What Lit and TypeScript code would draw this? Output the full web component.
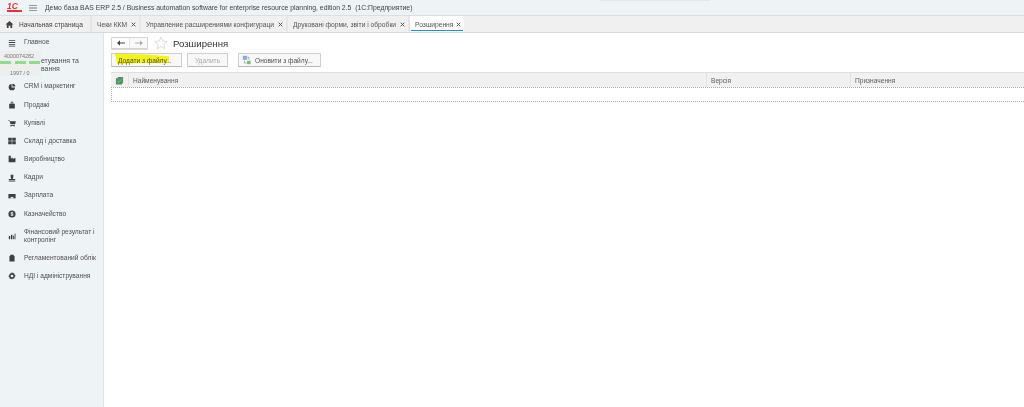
import { LitElement, html, css, svg } from "lit";
import { customElement } from "lit/decorators.js";

const icons: Record<string, unknown> = {
  menu: svg`<path d="M1 1.500h8v1.100H1zM1 3.800h8v1.100H1zM1 6.100h8v1.100H1zM1 8.400h8v1.100H1z"/>`,
  crm: svg`<path d="M4.500 1.200a4 4 0 1 0 4.300 4.300H4.500zM5.500 .8v3.700h3.700A3.800 3.800 0 0 0 5.500 .8z"/>`,
  bag: svg`<path d="M1.500 3.500h7v6h-7zM3.500 3.500V1h3v2.500h-.8V1.800H4.300v1.700z"/>`,
  cart: svg`<path d="M.2 1.500h2l.4 1.200h7.200l-.9 4H3.200L1.900 2.300H.2zM3 7.500h5.500v.8H3zM3.200 8.500h1.200v1H3.200zM7 8.500h1.200v1H7z"/>`,
  grid: svg`<path d="M.3 1h4.400v3.700H.3zM5.300 1h4.400v3.700H5.300zM.3 5.300h4.400V9H.3zM5.300 5.300h4.400V9H5.300z"/>`,
  factory: svg`<path d="M.8 1h2.700v3.500l2.500-1.500v2l3.300-1.500v5.500H.8z"/>`,
  person: svg`<path d="M3.300 .8h3.400v3.800H6l.2 1.700H9v1.500H1V6.300h2.800L4 4.600h-.7zM1 8.400h8v1H1z"/>`,
  wallet: svg`<path d="M.5 2.500h9v5.500h-9z"/><path fill="#eef3f6" d="M3 7l2-1.200L7 7v1H3z"/>`,
  coin: svg`<path fill-rule="evenodd" d="M5 .5a4.500 4.500 0 1 0 0 9 4.500 4.500 0 0 0 0-9zM3.500 2.800h3v1H4.700v.7H6.500v2.700h-3v-1h1.800v-.7H3.500z"/>`,
  chart: svg`<path d="M1 5h1.800v4H1zM3.700 3.500h1.800V9H3.700zM6.500 4.800h1.200V9H6.500zM8.300 2h1v7h-1z"/>`,
  doc: svg`<path d="M1.800 2.500h1V.8h4.400v1.700h1v7H1.800z"/>`,
  gear: svg`<path fill-rule="evenodd" d="M4.200 .5h1.600l.2 1.300 1-.6 1.400 1.300-.6 1 1.300.3v1.900l-1.300.3.600 1-1.400 1.300-1-.6-.2 1.300H4.200L4 8.200l-1 .6-1.400-1.300.6-1L.9 6.200V4.300l1.300-.3-.6-1L3 1.700l1 .6zM5 3.300a1.700 1.700 0 1 0 0 3.400 1.700 1.700 0 0 0 0-3.400z"/>`,
};

const nav: { icon?: string; label: string; cls: string }[] = [
  { icon: "menu", label: "Главное", cls: "h-main" },
  { label: "", cls: "h-over" },
  { icon: "crm", label: "CRM і маркетинг", cls: "" },
  { icon: "bag", label: "Продажі", cls: "" },
  { icon: "cart", label: "Купівлі", cls: "" },
  { icon: "grid", label: "Склад і доставка", cls: "" },
  { icon: "factory", label: "Виробництво", cls: "" },
  { icon: "person", label: "Кадри", cls: "" },
  { icon: "wallet", label: "Зарплата", cls: "" },
  { icon: "coin", label: "Казначейство", cls: "" },
  { icon: "chart", label: "Фінансовий результат і контролінг", cls: "tall" },
  { icon: "doc", label: "Регламентований облік", cls: "" },
  { icon: "gear", label: "НДІ і адміністрування", cls: "" },
];

const tabs = [
  { label: "Чеки ККМ", w: 49 },
  { label: "Управление расширениями конфигураци", w: 147 },
  { label: "Друковані форми, звіти і обробки", w: 122 },
  { label: "Розширення", w: 54, active: true },
];

@customElement("app-root")
export class AppRoot extends LitElement {
  static styles = css`
    :host {
      display: flex;
      flex-direction: column;
      width: 1024px;
      height: 407px;
      overflow: hidden;
      background: #fff;
      font-family: "Liberation Sans", Arial, sans-serif;
      font-size: 6.6px;
      color: #555;
      position: relative;
    }
    svg { display: block; }
    .title {
      height: 15px;
      flex: none;
      display: flex;
      align-items: center;
      background: #eef3f6;
      border-bottom: 1px solid #d9dfe2;
      position: relative;
    }
    .title::after {
      content: "";
      position: absolute;
      left: 600px;
      top: 0;
      width: 110px;
      height: 1px;
      background: #e4e8ea;
    }
    .logo {
      width: 15px;
      margin-left: 7px;
      font: italic bold 8.5px/7px "Liberation Sans", sans-serif;
      color: #e0353f;
      border-bottom: 2px solid #e0353f;
      box-sizing: border-box;
      height: 9px;
    }
    .burger { margin-left: 7px; margin-right: 8px; fill: #777; }
    .title-text { font-size: 6.83px; white-space: pre; color: #444; }
    .tabbar {
      height: 16px;
      flex: none;
      display: flex;
      background: #f0f0f0;
      border-bottom: 1px solid #d8d8d8;
    }
    .tab {
      display: flex;
      align-items: center;
      justify-content: space-between;
      box-sizing: border-box;
      height: 16px;
      padding: 0 3px 0 5px;
      border-right: 2px solid #e4e6e7;
      white-space: nowrap;
      color: #555;
      font-size: 6.7px;
    }
    .tab.home {
      width: 92px;
      justify-content: flex-start;
      gap: 5px;
      color: #444;
      font-size: 6.6px;
    }
    .tab.home svg { fill: #444; }
    .tab.active {
      background: #fff;
      border-right: none;
      position: relative;
    }
    .tab.active::after {
      content: "";
      position: absolute;
      left: 1px;
      right: 1px;
      bottom: 1px;
      height: 1px;
      background: #1b93d2;
    }
    .x { flex: none; stroke: #555; stroke-width: 1; fill: none; }
    .body { flex: 1; display: flex; min-height: 0; }
    .side {
      width: 104px;
      flex: none;
      box-sizing: border-box;
      background: #eef3f6;
      border-right: 1px solid #dde3e6;
      position: relative;
    }
    .item {
      display: flex;
      align-items: center;
      height: 18.2px;
      padding-left: 8px;
      gap: 8px;
      color: #505050;
      font-size: 6.65px;
      line-height: 8.5px;
    }
    .item svg { width: 8px; height: 8px; fill: #3e3e3e; flex: none; }
    .item.h-main { height: 19px; }
    .item.h-over { height: 25.5px; }
    .item.tall { height: 26px; }
    .item.tall span { width: 76px; }
    .peek {
      position: absolute;
      left: 41px;
      top: 23.5px;
      font-size: 6.9px;
      line-height: 8px;
      color: #505050;
      white-space: nowrap;
    }
    .badge {
      position: absolute;
      left: 0;
      top: 17.5px;
      width: 41px;
      height: 25px;
      background: #eeeeee;
      color: #777;
      font-size: 5.4px;
    }
    .badge .num { position: absolute; left: 4px; top: 2px; }
    .badge .sub { position: absolute; left: 10px; bottom: 0; }
    .dash { position: absolute; top: 10px; height: 3.5px; width: 11px; background: #8fdc8f; }
    .main { flex: 1; min-width: 0; padding: 3px 0 0 7px; }
    .head { display: flex; align-items: center; height: 14px; }
    .nav {
      display: flex;
      width: 37px;
      height: 12px;
      border: 1px solid #d3d3d3;
      box-sizing: border-box;
      border-radius: 1px;
      background: #fff;
      box-shadow: 0 1px 0 #dcdcdc;
    }
    .nav div { flex: 1; display: flex; align-items: center; justify-content: center; }
    .nav div + div { border-left: 1px solid #e4e4e4; background: #f9f9f9; }
    .star { margin-left: 6px; margin-right: 5px; fill: #fff; stroke: #d8d8d8; stroke-width: .9; }
    .h1 { font-size: 9.6px; color: #333; }
    .tools { display: flex; margin-top: 3px; height: 14px; }
    .btn {
      box-sizing: border-box;
      height: 14px;
      display: flex;
      align-items: center;
      border: 1px solid #cfcfcf;
      border-bottom-color: #b8b8b8;
      border-radius: 1px;
      background: #f8f8f8;
      color: #505050;
      white-space: nowrap;
    }
    .b1 { width: 71px; padding-left: 6px; }
    .b2 { width: 41px; margin-left: 5px; justify-content: center; color: #aaa; }
    .b3 { width: 83px; margin-left: 10px; padding-left: 3px; gap: 3px; }
    .mark {
      position: absolute;
      left: 115px;
      top: 53px;
      width: 54px;
      height: 11px;
      background: #fbfb1c;
      mix-blend-mode: multiply;
      clip-path: polygon(0 5%, 50% 12%, 100% 30%, 100% 88%, 50% 92%, 4% 100%);
    }
    .tbl { margin-top: 5px; }
    .thead {
      height: 15px;
      display: grid;
      grid-template-columns: 18px 578px 144px 1fr;
      background: #f1f1f1;
      border-top: 1px solid #dedede;
      box-sizing: border-box;
      color: #606060;
    }
    .thead > div {
      display: flex;
      align-items: center;
      padding-left: 4px;
      border-right: 1px solid #e2e2e2;
    }
    .thead > div:last-child { border-right: none; }
    .row {
      height: 15px;
      box-sizing: border-box;
      border: 1px dotted #a8a8a8;
      border-right: none;
    }
  `;

  render() {
    return html`
      <div class="title">
        <div class="logo">1С</div>
        <svg class="burger" width="8" height="8" viewBox="0 0 8 8"><path d="M0 1h8v.8H0zM0 3.600h8v.8H0zM0 6.200h8v.8H0z"/></svg>
        <div class="title-text">Демо база BAS ERP 2.5 / Business automation software for enterprise resource planning, edition 2.5  (1С:Предприятие)</div>
      </div>
      <div class="tabbar">
        <div class="tab home">
          <svg width="9" height="9" viewBox="0 0 10 10"><path d="M5 1l4.500 4H8v4H6V6.500H4V9H2V5H.5z"/></svg>
          <span>Начальная страница</span>
        </div>
        ${tabs.map(
          (t) => html`<div class="tab ${t.active ? "active" : ""}" style="width:${t.w}px">
            <span>${t.label}</span>
            <svg class="x" width="5" height="5" viewBox="0 0 5 5"><path d="M.7 .7l3.600 3.600M4.300 .7L.7 4.300"/></svg>
          </div>`
        )}
      </div>
      <div class="body">
        <aside class="side">
          ${nav.map(
            (n) => html`<div class="item ${n.cls}">
              ${n.icon ? html`<svg viewBox="0 0 10 10">${icons[n.icon]}</svg>` : ""}
              <span>${n.label}</span>
            </div>`
          )}
          <div class="peek"><div>етування та</div><div>вання</div></div>
          <div class="badge">
            <span class="num">4000074282</span>
            <i class="dash" style="left:0"></i>
            <i class="dash" style="left:15px"></i>
            <i class="dash" style="left:29px"></i>
            <span class="sub">1997 / 0</span>
          </div>
        </aside>
        <main class="main">
          <div class="head">
            <div class="nav">
              <div><svg width="8" height="6" viewBox="0 0 8 6"><path d="M0 3L3 .3v2.100h5v1.200H3v2.100z" fill="#444"/></svg></div>
              <div><svg width="8" height="6" viewBox="0 0 8 6"><path d="M8 3L5 .3v2.100H0v1.200h5v2.100z" fill="#b0b0b0"/></svg></div>
            </div>
            <svg class="star" width="14" height="14" viewBox="0 0 14 14"><path d="M7 1l1.800 4.100 4.400.4-3.300 2.900 1 4.400L7 10.500l-3.900 2.300 1-4.400L.8 5.500l4.400-.4z"/></svg>
            <div class="h1">Розширення</div>
          </div>
          <div class="tools">
            <div class="btn b1"><span>Додати з файлу...</span></div>
            <div class="btn b2">Удалить</div>
            <div class="btn b3">
              <svg width="10" height="10" viewBox="0 0 10 10"><path d="M.8 .8h4.400v4H.8z" fill="#7fb2d8"/><path d="M5 5.800h3.700v3.400H5z" fill="#7fbf7f"/><path d="M2.500 5.500v2.500h2M7 5V2.500H5.800" fill="none" stroke="#999" stroke-width=".8"/></svg>
              <span>Оновити з файлу...</span>
            </div>
          </div>
          <div class="tbl">
            <div class="thead">
              <div>
                <svg width="9" height="9" viewBox="0 0 10 10"><path d="M1 2.500h2V1h6v7H8v1.500H1z" fill="#5d8a78"/><path d="M2.500 5.200l1.800 1.800L8 3.200" fill="none" stroke="#35d035" stroke-width="1.500"/></svg>
              </div>
              <div>Найменування</div>
              <div>Версія</div>
              <div>Призначення</div>
            </div>
            <div class="row"></div>
          </div>
        </main>
      </div>
      <div class="mark"></div>
    `;
  }
}
